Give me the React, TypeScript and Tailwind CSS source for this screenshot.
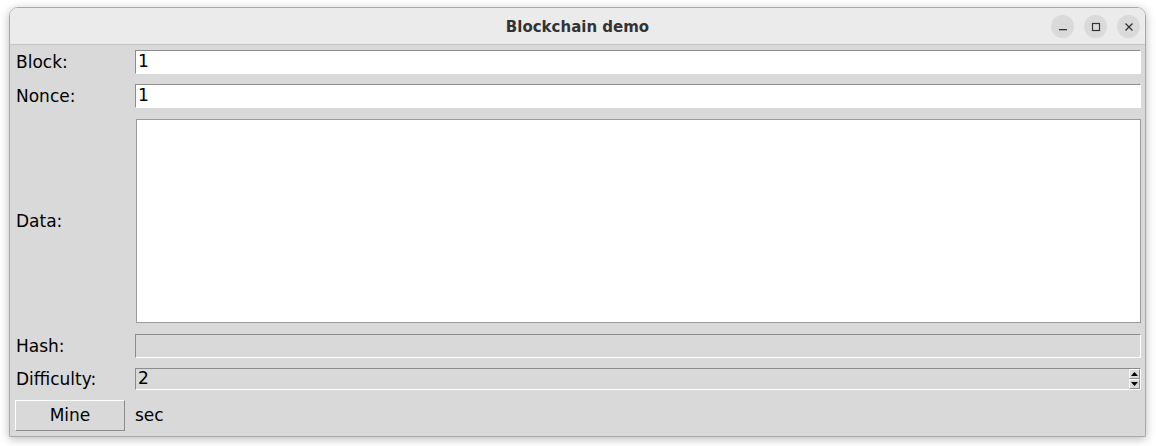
import React from "react";

const font = { fontFamily: '"DejaVu Sans", sans-serif' };

function Label({ children }: { children: React.ReactNode }) {
  return (
    <div className="w-[125px] shrink-0 pl-[6px] text-[17px] leading-none text-black">
      {children}
    </div>
  );
}

export default function App() {
  return (
    <div
      className="w-[1156px] h-[446px] bg-white overflow-hidden"
      style={font}
    >
      <div className="ml-[9px] mt-[7px] w-[1137px] h-[430px] flex flex-col rounded-t-[9px] border border-[#a9a9a9] shadow-[0_2px_10px_rgba(0,0,0,0.28)] overflow-hidden">
        {/* Title bar */}
        <div className="relative h-[37px] shrink-0 bg-[#ebebeb] border-b border-[#c4c4c4] flex items-center justify-center pt-[3px]">
          <span className="text-[15px] font-bold text-[#333333]">
            Blockchain demo
          </span>
          <div className="absolute right-[5px] top-[7px] flex gap-[10px]">
            <div className="w-[23px] h-[23px] rounded-full bg-[#dadada] flex items-center justify-center">
              <svg width="10" height="10" viewBox="0 0 10 10">
                <rect x="1" y="7" width="8" height="1.3" fill="#333" />
              </svg>
            </div>
            <div className="w-[23px] h-[23px] rounded-full bg-[#dadada] flex items-center justify-center">
              <svg width="10" height="10" viewBox="0 0 10 10">
                <rect x="1.5" y="1.5" width="7" height="7" fill="none" stroke="#333" strokeWidth="1.2" />
              </svg>
            </div>
            <div className="w-[23px] h-[23px] rounded-full bg-[#dadada] flex items-center justify-center">
              <svg width="10" height="10" viewBox="0 0 10 10">
                <path d="M1.5 1.5 L8.5 8.5 M8.5 1.5 L1.5 8.5" stroke="#333" strokeWidth="1.3" />
              </svg>
            </div>
          </div>
        </div>

        {/* Body */}
        <div className="flex-1 bg-[#d9d9d9] flex flex-col pt-[5px]">
          <div className="flex items-center h-[24px]">
            <Label>Block:</Label>
            <div className="w-[1006px] h-[24px] bg-white border-t border-l border-[#8c8c8c] border-r-white border-b-white border-r border-b flex items-center pl-[2px] text-[17px] text-black">
              1
            </div>
          </div>
          <div className="flex items-center h-[24px] mt-[10px]">
            <Label>Nonce:</Label>
            <div className="w-[1006px] h-[24px] bg-white border-t border-l border-[#8c8c8c] border-r-white border-b-white border-r border-b flex items-center pl-[2px] text-[17px] text-black">
              1
            </div>
          </div>
          <div className="flex items-center h-[204px] mt-[11px]">
            <Label>Data:</Label>
            <div className="ml-[1px] w-[1005px] h-[204px] bg-white border border-[#9a9a9a]" />
          </div>
          <div className="flex items-center h-[24px] mt-[11px]">
            <Label>Hash:</Label>
            <div className="w-[1006px] h-[24px] bg-[#d9d9d9] border-t border-l border-[#8c8c8c] border-r-white border-b-white border-r border-b" />
          </div>
          <div className="flex items-center h-[22px] mt-[10px]">
            <Label>Difficulty:</Label>
            <div className="w-[1006px] h-[22px] bg-[#d9d9d9] border-t border-l border-[#8c8c8c] border-r-white border-b-white border-r border-b flex items-center pl-[2px] text-[17px] text-black justify-between">
              <span>2</span>
              <div className="flex flex-col">
                <div className="w-[11px] h-[10px] bg-[#d9d9d9] border-t border-l border-white border-r border-b border-r-[#8c8c8c] border-b-[#8c8c8c] flex items-center justify-center">
                  <svg width="7" height="4" viewBox="0 0 7 4">
                    <path d="M3.5 0 L7 4 L0 4 Z" fill="#000" />
                  </svg>
                </div>
                <div className="w-[11px] h-[10px] bg-[#d9d9d9] border-t border-l border-white border-r border-b border-r-[#8c8c8c] border-b-[#8c8c8c] flex items-center justify-center">
                  <svg width="7" height="4" viewBox="0 0 7 4">
                    <path d="M0 0 L7 0 L3.5 4 Z" fill="#000" />
                  </svg>
                </div>
              </div>
            </div>
          </div>
          <div className="flex items-center h-[31px] mt-[10px]">
            <div className="ml-[5px] w-[110px] h-[31px] bg-[#d9d9d9] border-t border-l border-white border-r border-b border-r-[#8c8c8c] border-b-[#8c8c8c] flex items-center justify-center text-[17px] text-black">
              Mine
            </div>
            <div className="ml-[10px] text-[17px] text-black">sec</div>
          </div>
        </div>
      </div>
    </div>
  );
}
